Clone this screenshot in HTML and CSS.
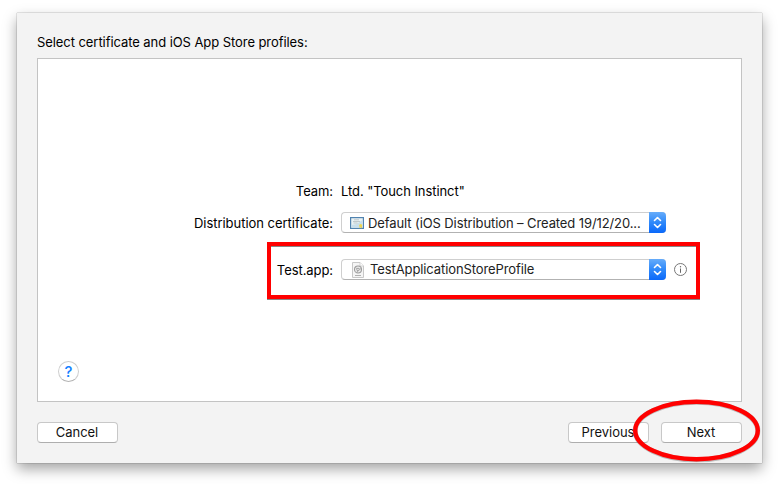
FILE: index.html
```
<!DOCTYPE html>
<html lang="en">
<head>
<meta charset="utf-8">
<title>Select certificate</title>
<link rel="stylesheet" href="styles.css">
</head>
<body>
<main class="dialog">
  <h1 class="title">Select certificate and iOS App Store profiles:</h1>
  <section class="panel">
    <div class="row team">
      <span class="label">Team:</span>
      <span>Ltd. "Touch Instinct"</span>
    </div>
    <div class="row cert">
      <span class="label">Distribution certificate:</span>
      <div class="select">
        <svg class="ico-cert" width="14" height="12" viewBox="0 0 14 12">
          <rect x=".6" y=".6" width="12.8" height="10.8" fill="#e9f2f4" stroke="#5083b0" stroke-width="1.2"/>
          <path d="M1.5 10.5V8l5-1 6-4v7.500z" fill="#c9dfeb"/>
          <path d="M4 2.800h5M3 4.500h7M3.500 6h4" stroke="#a3abae" stroke-width=".6"/>
          <circle cx="10.700" cy="8.500" r="1.500" fill="#f1d84b"/>
          <path d="M10 9.500v1.700M11.500 9.500v1.700" stroke="#e4c63c" stroke-width=".8"/>
        </svg>
        <span class="value">Default (iOS Distribution – Created 19/12/20...</span>
        <span class="stepper"><svg width="17" height="21" viewBox="0 0 17 21"><path d="M5.500 8.500l3-3 3 3M5.500 12.500l3 3 3-3" fill="none" stroke="#fff" stroke-width="1.600" stroke-linecap="round" stroke-linejoin="round"/></svg></span>
      </div>
    </div>
    <div class="row app">
      <span class="label">Test.app:</span>
      <div class="select">
        <svg class="ico-doc" width="12" height="16" viewBox="0 0 12 16">
          <path d="M.5.5h7.500l3.500 3.500v11.500H.5z" fill="#f5f5f5" stroke="#c8c8c8"/>
          <path d="M8 .5V4h3.500" fill="#fff" stroke="#c8c8c8" stroke-width=".8"/>
          <circle cx="6" cy="7.500" r="3.500" fill="#ececec" stroke="#9c9c9c" stroke-width="1.100"/>
          <path d="M6 7.500l3.200-.8M6 7.500L3.500 5.500M6 7.500l-1 3.200" stroke="#9c9c9c" stroke-width=".8"/>
          <circle cx="6" cy="7.500" r="1.300" fill="#e5e5e5" stroke="#969696" stroke-width=".8"/>
          <path d="M3 13.500h6" stroke="#b0b0b0"/>
        </svg>
        <span class="value">TestApplicationStoreProfile</span>
        <span class="stepper"><svg width="17" height="21" viewBox="0 0 17 21"><path d="M5.500 8.500l3-3 3 3M5.500 12.500l3 3 3-3" fill="none" stroke="#fff" stroke-width="1.600" stroke-linecap="round" stroke-linejoin="round"/></svg></span>
      </div>
      <svg class="info" width="14" height="14" viewBox="0 0 14 14"><circle cx="6.500" cy="6.500" r="6" fill="none" stroke="#777"/><path d="M6.500 5.500v4.300" stroke="#666"/><circle cx="6.500" cy="3.700" r=".7" fill="#666"/></svg>
    </div>
    <button class="help">?</button>
  </section>
  <footer class="actions">
    <button class="btn cancel">Cancel</button>
    <button class="btn">Previous</button>
    <button class="btn">Next</button>
  </footer>
</main>
<div class="mark-box"></div>
<svg class="mark-oval" width="130" height="66" viewBox="0 0 130 66"><ellipse cx="64.500" cy="33" rx="61.300" ry="28.800" fill="none" stroke="#777" stroke-opacity=".45" stroke-width="5"/><ellipse cx="64.500" cy="32.500" rx="61.300" ry="28.800" fill="none" stroke="#f00" stroke-width="4.400"/></svg>
</body>
</html>
```
FILE: styles.css
```
* { box-sizing: border-box; }
html, body { height: 100%; }
body {
  margin: 0;
  padding: 13px 17px 21px;
  background: #fff;
  overflow: hidden;
  font: 13px/16px Inter, "Liberation Sans", sans-serif;
  letter-spacing: -.07px;
  color: #000;
}
span { white-space: nowrap; }
.dialog {
  width: 745px;
  height: 450px;
  padding: 21px 20px 0;
  background: #f3f3f3;
  box-shadow: 0 0 1px rgba(0,0,0,.55), 0 6px 13px rgba(0,0,0,.36);
}
.title {
  margin: 0 0 8px;
  font-size: 13px;
  font-weight: 400;
  line-height: 16px;
}
.panel {
  width: 705px;
  height: 344px;
  padding-top: 124px;
  background: #fff;
  border: 1px solid #c3c3c3;
}
.row {
  display: grid;
  grid-template-columns: 295px 325px 14px;
  column-gap: 8px;
  align-items: center;
}
.team { height: 17px; padding-bottom: 1px; }
.cert { height: 21px; margin-top: 12px; }
.app { height: 21px; margin-top: 26px; }
.label { text-align: right; }
.cert .label { padding-top: 1px; letter-spacing: -.03px; }
.select {
  display: flex;
  align-items: center;
  width: 325px;
  height: 21px;
  padding-left: 8px;
  border: 1px solid #cfcfcf;
  border-bottom-color: #b2b2b2;
  border-right: 0;
  border-radius: 4px;
  background: #fff;
  color: #222;
}
.ico-cert { margin-right: 4px; flex: none; }
.ico-doc { margin: 0 6px 0 2px; flex: none; }
.value { flex: 1; letter-spacing: -.1px; }
.app .value { padding-bottom: 2px; }
.stepper {
  width: 17px;
  height: 21px;
  margin: -1px 0;
  border-radius: 0 4px 4px 0;
  background: linear-gradient(#66acfa, #2f89fa 50%, #0a68fa);
}
.stepper svg { display: block; }
.info { display: block; }
.help {
  display: block;
  width: 21px;
  height: 21px;
  margin: 81px 0 0 20px;
  padding: 0;
  border: 1px solid #cecece;
  border-bottom-color: #b2b2b2;
  border-radius: 50%;
  background: #fff;
  color: #1280ff;
  font: 500 15px/18px Inter, sans-serif;
}
.actions { display: flex; gap: 12px; margin-top: 20px; }
.btn {
  width: 81px;
  height: 21px;
  padding: 0 1px 1px 0;
  border: 1px solid #c8c8c8;
  border-bottom-color: #aeaeae;
  border-radius: 4px;
  background: #fff;
  color: #111;
  font: 13px/18px Inter, sans-serif;
  letter-spacing: -.04px;
}
.cancel { margin-right: auto; }
.mark-box {
  position: absolute;
  left: 267px;
  top: 242px;
  width: 433px;
  height: 57px;
  border: 4px solid #f00;
  box-shadow: 0 1px 0 #888, inset 0 1px 0 #888;
}
.mark-oval { position: absolute; left: 632px; top: 398px; }
```
